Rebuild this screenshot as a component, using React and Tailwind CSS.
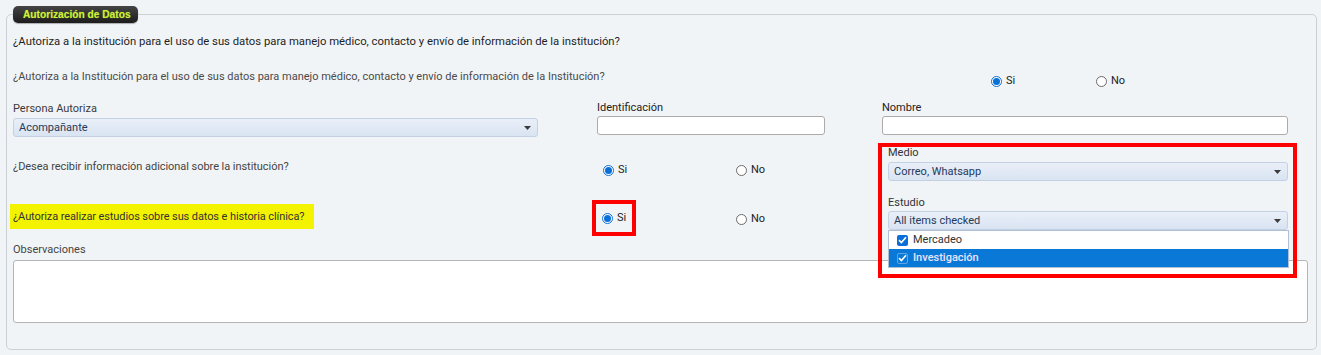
import { useState } from "react";

// Radio y checkbox dibujados a mano para que coincidan con el render de Chrome
function Radio({ checked, label }) {
  return (
    <div className="flex items-center gap-[4px] h-[14px]">
      <span
        className={`w-[11px] h-[11px] rounded-full border bg-white flex items-center justify-center ${
          checked ? "border-[#0b6fd8]" : "border-[#6b6b6b]"
        }`}
      >
        {checked && <span className="w-[7px] h-[7px] rounded-full bg-[#0b6fd8]" />}
      </span>
      <span className="text-[#222]">{label}</span>
    </div>
  );
}

function Check({ light }) {
  return (
    <span
      className={`w-[11px] h-[11px] rounded-[2px] flex items-center justify-center ${
        light ? "border border-[#5ea6ea] bg-[#0a78d6]" : "bg-[#0a6fd8]"
      }`}
    >
      <svg width="9" height="8" viewBox="0 0 9 8">
        <path d="M1 4.2 3.4 6.5 8 1.2" fill="none" stroke="#fff" strokeWidth="1.6" />
      </svg>
    </span>
  );
}

function Select({ value, className = "" }) {
  return (
    <div
      className={`h-[19px] flex items-center justify-between pl-[5px] pr-[6px] border border-[#c4d1e3] rounded-[3px] bg-linear-to-b from-[#e9eff8] to-[#d9e4f2] text-[#25395a] ${className}`}
    >
      <span>{value}</span>
      <svg width="7" height="4" viewBox="0 0 7 4">
        <path d="M0 0h7L3.5 4z" fill="#3b3b3b" />
      </svg>
    </div>
  );
}

function TextInput({ className = "" }) {
  return <div className={`h-[19px] bg-white border border-[#ababab] rounded-[3px] ${className}`} />;
}

export default function App() {
  const [open] = useState(true);

  return (
    <div className="w-[1321px] h-[355px] bg-[#f1f4f6] pt-[6px] pl-[6px] font-[Roboto,'Noto_Sans',sans-serif] text-[11px] leading-[14px]">
      <fieldset className="w-[1311px] h-[344px] border border-[#cbd0d4] rounded-[5px] pl-[6px]">
        <legend className="h-[17px] pl-[10px] pr-[7px] flex items-center rounded-[5px] bg-linear-to-b from-[#444] to-[#1d1d1d] shadow-[0_1px_1px_rgba(0,0,0,0.3)]">
          <span className="font-['Liberation_Sans',Arial,sans-serif] font-bold text-[10.2px] text-[#cdf236] [text-shadow:0_0_1px_rgba(200,240,40,0.5)]">
            Autorización de Datos
          </span>
        </legend>

        {/* Pregunta principal */}
        <div className="mt-[12px] text-[11.3px] text-[#1e1e1e]">
          ¿Autoriza a la institución para el uso de sus datos para manejo médico, contacto y envío de información de la institución?
        </div>

        {/* Pregunta con radios */}
        <div className="mt-[21px] flex items-start">
          <div className="w-[978px] text-[#4a4a4a]">
            ¿Autoriza a la Institución para el uso de sus datos para manejo médico, contacto y envío de información de la Institución?
          </div>
          <div className="mt-[4px] w-[105px]">
            <Radio checked label="Si" />
          </div>
          <div className="mt-[4px]">
            <Radio label="No" />
          </div>
        </div>

        {/* Persona / Identificación / Nombre */}
        <div className="mt-[13px] flex">
          <div className="w-[584px] flex flex-col">
            <span className="text-[#3a3a3a] pt-px">Persona Autoriza</span>
            <Select value="Acompañante" className="mt-[2px] w-[525px]" />
          </div>
          <div className="w-[285px] flex flex-col">
            <span className="text-[#222]">Identificación</span>
            <TextInput className="mt-px w-[228px]" />
          </div>
          <div className="flex flex-col">
            <span className="text-[#222]">Nombre</span>
            <TextInput className="mt-px w-[406px]" />
          </div>
        </div>

        {/* Bloque medio / estudio */}
        <div className="mt-[6px] flex">
          <div className="w-[869px]">
            <div className="mt-[17px] flex items-start">
              <div className="w-[590px] text-[#444] tracking-[-0.05px]">¿Desea recibir información adicional sobre la institución?</div>
              <div className="mt-[3px] w-[133px]">
                <Radio checked label="Si" />
              </div>
              <div className="mt-[3px]">
                <Radio label="No" />
              </div>
            </div>

            <div className="mt-[27px] flex items-start">
              <div className="w-[304px] h-[25px] -ml-[3px] pl-[3px] flex items-center bg-[#f3f300] text-[#333] tracking-[-0.1px]">
                ¿Autoriza realizar estudios sobre sus datos e historia clínica?
              </div>
              <div className="ml-[278px] -mt-[4px] w-[44px] h-[36px] border-[4px] border-[#ff0000] pl-[6px] flex items-center">
                <Radio checked label="Si" />
              </div>
              <div className="ml-[100px] mt-[8px]">
                <Radio label="No" />
              </div>
            </div>
          </div>

          <div className="relative w-[412px] pl-[6px] pt-[3px] flex flex-col">
            <span className="text-[#333]">Medio</span>
            <Select value="Correo, Whatsapp" className="mt-[2px] w-[400px]" />
            <span className="mt-[15px] text-[#333]">Estudio</span>
            <div className="relative mt-px">
              <Select value="All items checked" className="w-[400px]" />
              {open && (
                <div className="absolute z-10 left-0 top-[19px] w-[401px] border border-[#aebfd6] bg-white">
                  <div className="h-[18px] flex items-center gap-[5px] pl-[8px] text-[#333]">
                    <Check />
                    <span>Mercadeo</span>
                  </div>
                  <div className="h-[18px] flex items-center gap-[5px] pl-[8px] bg-[#0a78d6] text-[#e9e4ff] font-medium">
                    <Check light />
                    <span>Investigación</span>
                  </div>
                </div>
              )}
            </div>
            <div className="absolute z-20 -left-[4px] top-0 w-[419px] h-[135px] border-[4px] border-[#ff0000] pointer-events-none" />
          </div>
        </div>

        {/* Observaciones */}
        <div className="mt-[7px] text-[#444]">Observaciones</div>
        <div className="mt-[3px] w-[1295px] h-[63px] bg-white border border-[#b5b5b5] rounded-[3px]" />
      </fieldset>
    </div>
  );
}
